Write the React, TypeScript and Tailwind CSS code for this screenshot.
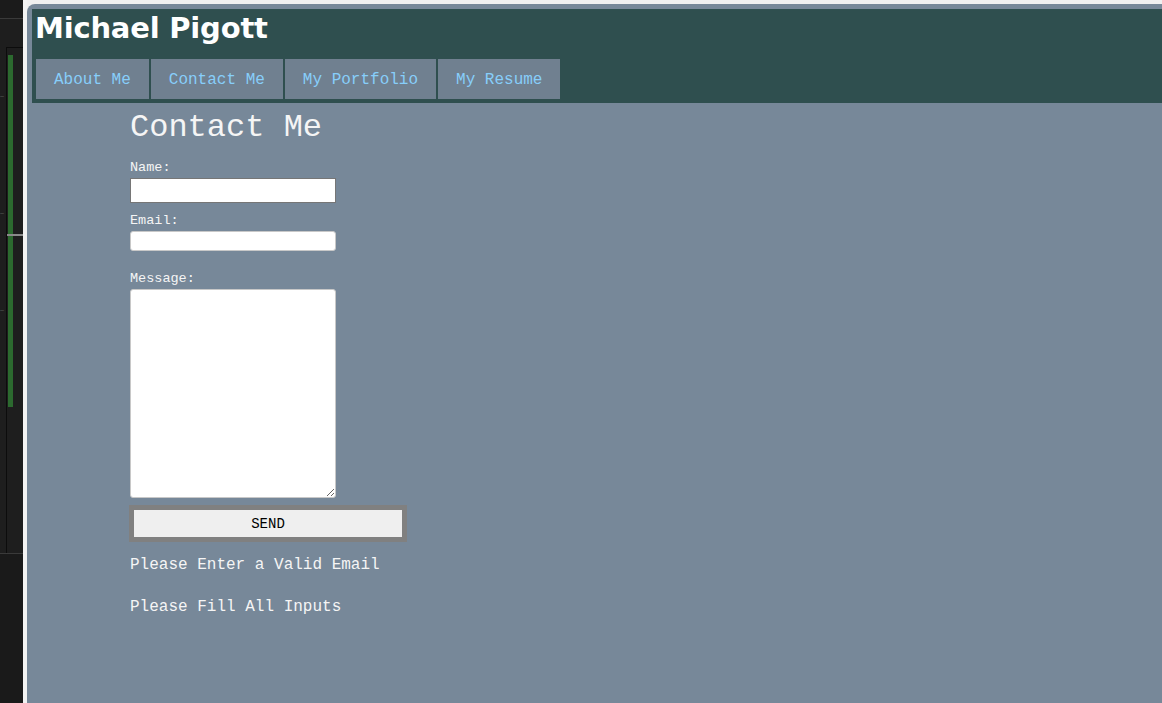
import React from "react";

const mono = { fontFamily: '"Liberation Mono", "Courier New", monospace' };

function DevStrip() {
  return (
    <div className="relative w-[23px] shrink-0 bg-[#1e1e1e] flex flex-col">
      <div className="h-[19px] bg-[#1b1b1b] border-b border-[#3a3a3a]" />
      <div className="h-[28px]" />
      <div className="relative flex-none h-[506px] ml-[6px] border-l border-t border-[#0c0c0c]">
        <div className="absolute left-[1px] top-[7px] w-[5px] h-[352px] bg-[#2c6a2f]" />
        <div className="absolute left-0 right-0 top-[186px] h-[2px] bg-[#8a8a8a]" />
      </div>
      <div className="flex-1 bg-[#1a1a1a] border-t border-[#3a3a3a]" />
      <span className="absolute left-0 top-[94px] text-[4px] leading-none text-[#888]">—</span>
      <span className="absolute left-0 top-[211px] text-[4px] leading-none text-[#888]">—</span>
      <span className="absolute left-0 top-[308px] text-[4px] leading-none text-[#888]">—</span>
    </div>
  );
}

export default function App() {
  const navItems = ["About Me", "Contact Me", "My Portfolio", "My Resume"];
  return (
    <div className="flex w-[1162px] h-[703px] overflow-hidden bg-[#f0f0f0]">
      <DevStrip />
      <div className="w-[4px] shrink-0 bg-[#f3f3f3]" />
      <div className="flex-1 flex flex-col pt-[4px] bg-[#f0f0f0] min-w-0">
        <div className="flex-1 bg-[#778899] rounded-tl-[8px] pl-[5px] pt-[5px] flex flex-col">
          <header className="bg-[#2f4f4f] pl-[3px] pb-[4px]">
            <h1
              className="text-[29px] font-bold text-white leading-[38px] h-[50px] tracking-[-0.2px]"
              style={{ fontFamily: '"DejaVu Sans", Verdana, sans-serif' }}
            >
              Michael Pigott
            </h1>
            <nav className="flex gap-[2px] pl-[1px]">
              {navItems.map((n) => (
                <div
                  key={n}
                  className="h-[40px] px-[18px] pt-[1px] bg-[#708090] text-[#87cefa] text-[16px] flex items-center"
                  style={mono}
                >
                  {n}
                </div>
              ))}
            </nav>
          </header>
          <main className="pl-[98px] text-[#f5f5f5]" style={mono}>
            <h2 className="text-[32px] leading-[36px] mt-[7px]">Contact Me</h2>
            <form className="flex flex-col mt-[14px]" onSubmit={(e) => e.preventDefault()}>
              <label className="text-[13.5px] leading-[16px]">Name:</label>
              <input
                type="text"
                className="mt-[2px] w-[206px] h-[25px] bg-white border border-[#767676] rounded-none"
              />
              <label className="text-[13.5px] leading-[16px] mt-[10px]">Email:</label>
              <input
                type="email"
                className="mt-[2px] w-[206px] h-[20px] bg-white border border-[#c8c8c8] rounded-[3px]"
              />
              <label className="text-[13.5px] leading-[16px] mt-[20px]">Message:</label>
              <textarea className="mt-[2px] w-[206px] h-[209px] bg-white border border-[#c8c8c8] rounded-[3px]" />
              <button
                type="submit"
                className="mt-[7px] -ml-[1px] w-[278px] h-[37px] pt-[1px] bg-[#efefef] border-[5px] border-[#808080] text-black text-[14px]"
                style={mono}
              >
                SEND
              </button>
            </form>
            <p className="text-[16px] leading-[20px] mt-[13px]">Please Enter a Valid Email</p>
            <p className="text-[16px] leading-[20px] mt-[22px]">Please Fill All Inputs</p>
          </main>
        </div>
      </div>
    </div>
  );
}
